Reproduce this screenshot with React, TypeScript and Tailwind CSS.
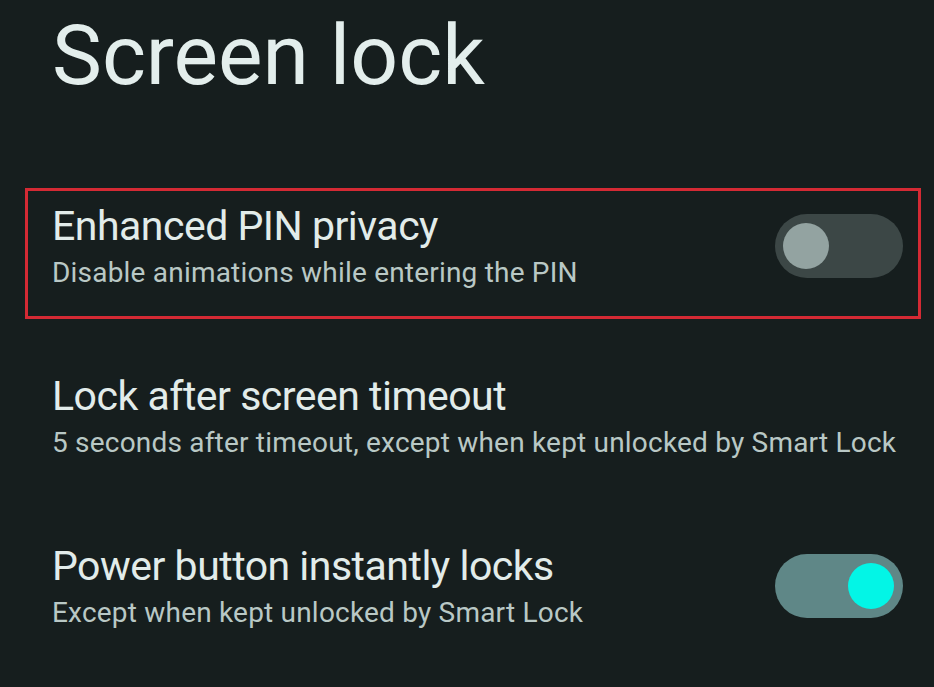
import React from "react"

type RowProps = {
  title: string
  subtitle: string
  toggle?: "on" | "off"
  highlighted?: boolean
}

const Toggle = ({ on }: { on: boolean }) => {
  if (on) {
    return (
      <div className="flex h-[64px] w-[128px] shrink-0 items-center justify-end rounded-full bg-[#5f8787] pr-[9px]">
        <div className="h-[46px] w-[46px] rounded-full bg-[#03f5e6]" />
      </div>
    )
  }
  return (
    <div className="flex h-[64px] w-[128px] shrink-0 items-center rounded-full bg-[#3c4746] pl-[8px]">
      <div className="h-[46px] w-[46px] rounded-full bg-[#93a3a1]" />
    </div>
  )
}

const SettingRow = ({ title, subtitle, toggle, highlighted }: RowProps) => (
  <div
    className={
      highlighted
        ? "flex h-[131px] w-[896px] items-center justify-between border-[3px] border-[#d42a34] pl-[24px] pr-[15px] pt-[10px] pb-[26px]"
        : "flex h-[131px] w-[896px] items-center justify-between border-[3px] border-transparent pl-[24px] pr-[15px] pt-[10px] pb-[26px]"
    }
  >
    <div className="flex flex-col">
      <div className="text-[41px] leading-[50px] tracking-[-0.5px] text-[#e2ecea]">{title}</div>
      <div className="mt-[4px] text-[28px] leading-[36px] tracking-[0.2px] text-[#b9c8c5]">{subtitle}</div>
    </div>
    {toggle && <Toggle on={toggle === "on"} />}
  </div>
)

export default function App() {
  return (
    <div
      className="h-[687px] w-[934px] overflow-hidden bg-[#161e1e] pt-[14px]"
      style={{ fontFamily: "Roboto, 'Noto Sans', sans-serif" }}
    >
      <h1 className="pl-[52px] text-[84px] leading-[84px] text-[#e3eeec]">Screen lock</h1>

      {/* settings list */}
      <div className="mt-[90px] flex flex-col gap-[39px] pl-[25px]">
        <SettingRow
          title="Enhanced PIN privacy"
          subtitle="Disable animations while entering the PIN"
          toggle="off"
          highlighted
        />
        <SettingRow
          title="Lock after screen timeout"
          subtitle="5 seconds after timeout, except when kept unlocked by Smart Lock"
        />
        <SettingRow
          title="Power button instantly locks"
          subtitle="Except when kept unlocked by Smart Lock"
          toggle="on"
        />
      </div>
    </div>
  )
}
